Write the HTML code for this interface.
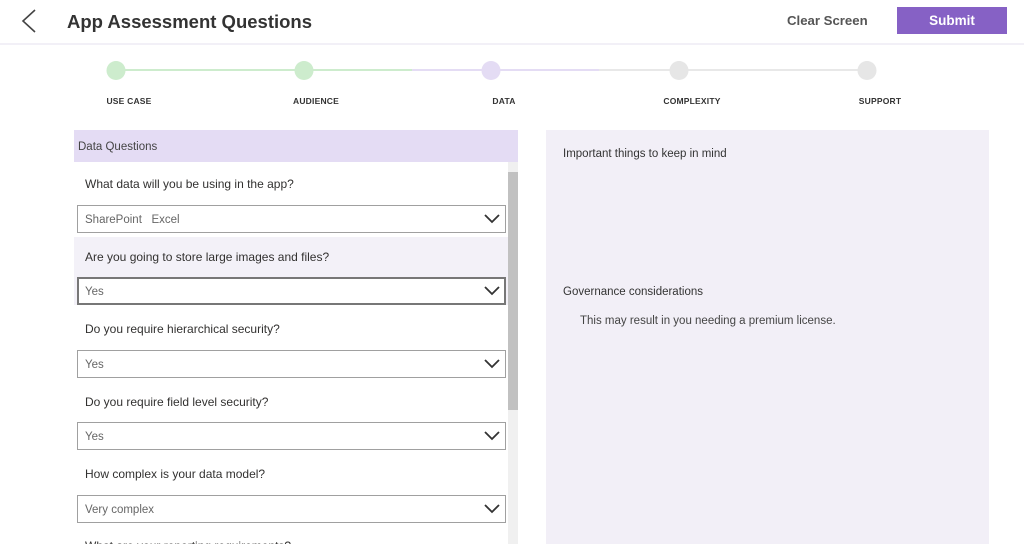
<!DOCTYPE html>
<html><head><style>
*{margin:0;padding:0;box-sizing:border-box}
html,body{width:1024px;height:544px;overflow:hidden}
body{background:#fff;font-family:"Liberation Sans",sans-serif;color:#323130;position:relative}
.a{position:absolute}
.lbl{font-size:8.5px;font-weight:bold;letter-spacing:.2px;color:#333;transform:translateX(-50%)}
.c{width:19px;height:19px;border-radius:50%;top:61px;transform:translateX(-50%)}
.q{left:85px;font-size:12px;color:#323130}
.dd{left:77px;width:429px;height:28px;border:1px solid #a0a0a0;background:#fff;font-size:11.5px;color:#666;padding:8px 0 0 7px}
.dd svg{position:absolute;right:5px;top:7px}
</style></head><body>
<svg class="a" style="left:20px;top:8px" width="18" height="26"><path d="M15 2 L3 13 L15 24" fill="none" stroke="#444" stroke-width="1.6"/></svg>
<div class="a" style="left:67px;top:11px;font-size:18.5px;font-weight:bold;color:#333">App Assessment Questions</div>
<div class="a" style="left:787px;top:13px;font-size:13.2px;font-weight:bold;color:#555">Clear Screen</div>
<div class="a" style="left:897px;top:7px;width:110px;height:27px;background:#8661c5;color:#fff;font-size:13.5px;font-weight:bold;text-align:center;line-height:27px">Submit</div>
<div class="a" style="left:0;top:43px;width:1024px;height:2px;background:#f2f0f7"></div>
<div class="a" style="left:116px;top:69px;width:296px;height:2px;background:#cdeccd"></div>
<div class="a" style="left:412px;top:69px;width:187px;height:2px;background:#e4dcf4"></div>
<div class="a" style="left:599px;top:69px;width:268px;height:2px;background:#e8e8e8"></div>
<div class="a c" style="left:116px;background:#cdeccd"></div>
<div class="a c" style="left:304px;background:#cdeccd"></div>
<div class="a c" style="left:491px;background:#e4dcf4"></div>
<div class="a c" style="left:679px;background:#e6e6e6"></div>
<div class="a c" style="left:867px;background:#e6e6e6"></div>
<div class="a lbl" style="left:129px;top:96px">USE CASE</div>
<div class="a lbl" style="left:316px;top:96px">AUDIENCE</div>
<div class="a lbl" style="left:504px;top:96px">DATA</div>
<div class="a lbl" style="left:692px;top:96px">COMPLEXITY</div>
<div class="a lbl" style="left:880px;top:96px">SUPPORT</div>
<div class="a" style="left:74px;top:130px;width:444px;height:32px;background:#e4dcf4;font-size:11.5px;padding:11px 0 0 4px;color:#444">Data Questions</div>
<div class="a" style="left:74px;top:237px;width:434px;height:68px;background:#f3f1f8"></div>
<div class="a" style="left:508px;top:162px;width:10px;height:382px;background:#f0f0f0"></div>
<div class="a" style="left:508px;top:172px;width:10px;height:238px;background:#c1c1c1"></div>
<div class="a q" style="top:177px">What data will you be using in the app?</div>
<div class="a dd" style="top:205px">SharePoint&nbsp;&nbsp; Excel<svg width="16" height="12"><path d="M1 2 L8 9 L15 2" fill="none" stroke="#333" stroke-width="1.8"/></svg></div>
<div class="a q" style="top:250px">Are you going to store large images and files?</div>
<div class="a dd" style="top:277px;border:2px solid #777;padding:7px 0 0 6px">Yes<svg width="16" height="12" style="right:4px;top:6px"><path d="M1 2 L8 9 L15 2" fill="none" stroke="#333" stroke-width="1.8"/></svg></div>
<div class="a q" style="top:322px">Do you require hierarchical security?</div>
<div class="a dd" style="top:350px">Yes<svg width="16" height="12"><path d="M1 2 L8 9 L15 2" fill="none" stroke="#333" stroke-width="1.8"/></svg></div>
<div class="a q" style="top:395px">Do you require field level security?</div>
<div class="a dd" style="top:422px">Yes<svg width="16" height="12"><path d="M1 2 L8 9 L15 2" fill="none" stroke="#333" stroke-width="1.8"/></svg></div>
<div class="a q" style="top:467px">How complex is your data model?</div>
<div class="a dd" style="top:495px">Very complex<svg width="16" height="12"><path d="M1 2 L8 9 L15 2" fill="none" stroke="#333" stroke-width="1.8"/></svg></div>
<div class="a q" style="top:539px">What are your reporting requirements?</div>
<div class="a" style="left:546px;top:130px;width:443px;height:414px;background:#f2eff7"></div>
<div class="a" style="left:563px;top:148px;font-size:11.5px;color:#333">Important things to keep in mind</div>
<div class="a" style="left:563px;top:286px;font-size:11.5px;color:#333">Governance considerations</div>
<div class="a" style="left:580px;top:315px;font-size:11.5px;color:#444">This may result in you needing a premium license.</div>
</body></html>
